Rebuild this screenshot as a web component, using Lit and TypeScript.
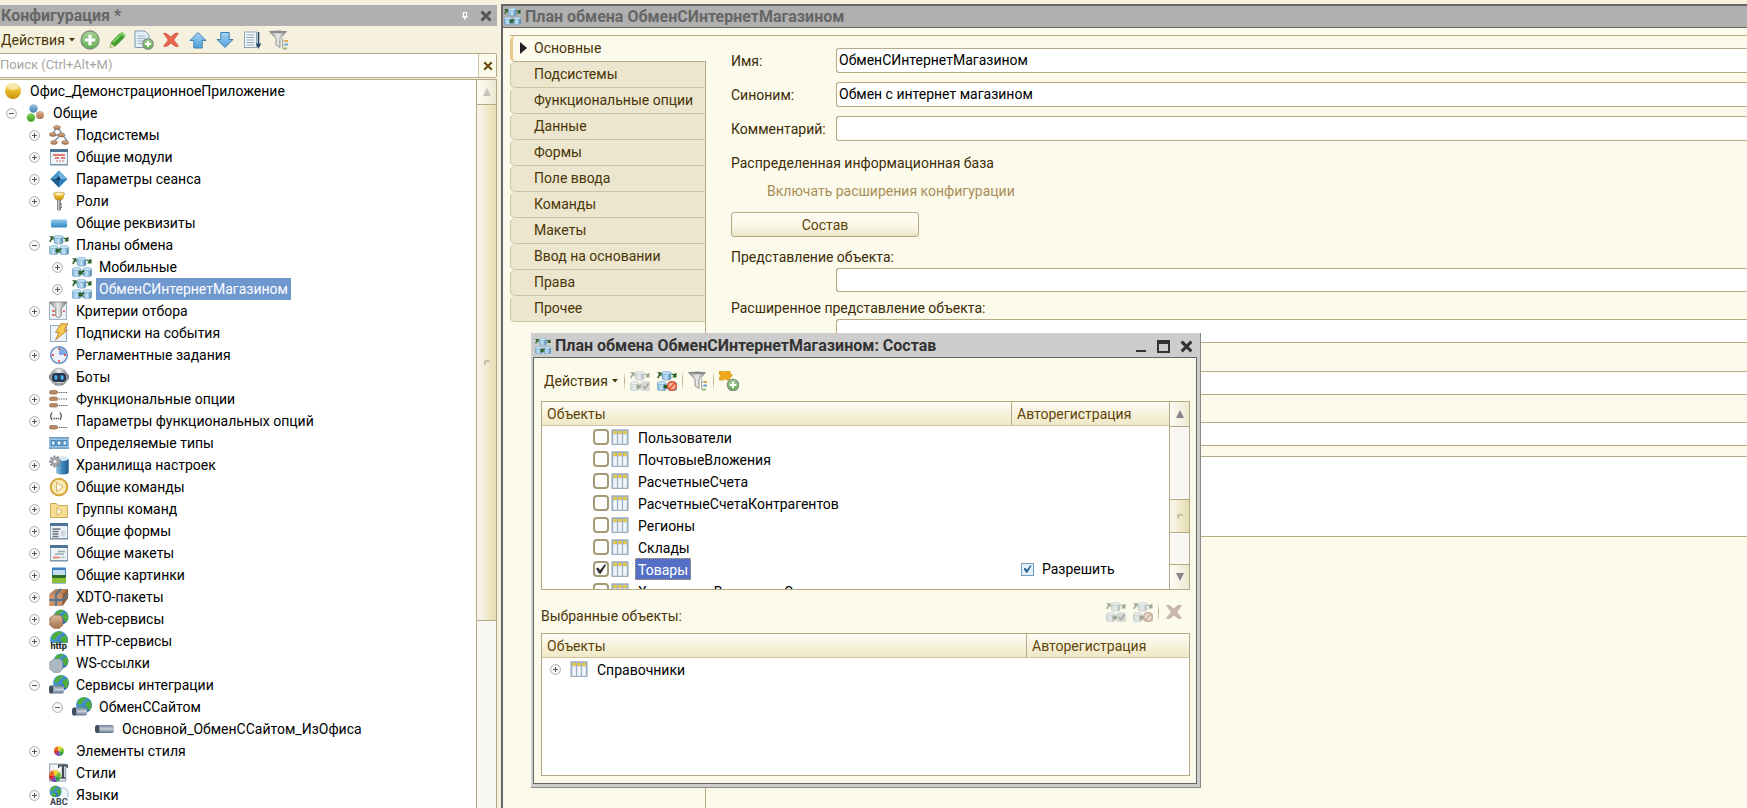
import { LitElement, html, svg, css, nothing, TemplateResult, SVGTemplateResult } from "lit";
import { customElement, state } from "lit/decorators.js";
import { classMap } from "lit/directives/class-map.js";

const cylinder = (x: number, y: number) => svg`
  <path d="M${x} ${y + 1.6}v6.200c0 1.900 8.600 1.900 8.600 0v-6.200z" fill="url(#cyl)" stroke="#5f93b5" stroke-width=".6"/>
  <ellipse cx="${x + 4.3}" cy="${y + 1.7}" rx="4.300" ry="1.600" fill="#c4e2f3" stroke="#6fa5c6" stroke-width=".6"/>`;

const exchangeBase = svg`
  ${cylinder(5.3, 0)}${cylinder(0.4, 10.5)}${cylinder(11, 10.5)}
  <path d="M0 1.200h4.600v4.200L3.300 4.200 1.300 7.400 .2 6.400 2 3z" fill="#2a5f27"/>
  <path d="M14.600 2l1.600 1.200 3.300-1.400v4.600h-4.300l1.400-1.600-2-1.200z" fill="#2a5f27"/>
  <path d="M6.500 17.200l.4-4.200 1.300 1.200 4-1.200v1.800l-2.200 1.200 2.800 1.600z" fill="#2a5f27"/>`;

const windowFrame = svg`
  <rect x="1.500" y="2.500" width="17" height="15" fill="#eef3f8" stroke="#8aa3ba"/>
  <rect x="1" y="2" width="18" height="3" fill="#4d7396"/>
  <path d="M1 18h18" stroke="#6f8aa3"/>`;

const globe = (cx: number, cy: number, r: number) => svg`
  <circle cx="${cx}" cy="${cy}" r="${r}" fill="url(#sea)"/>
  <path transform="translate(${cx} ${cy}) scale(${r / 8})" fill="#4fae3a"
    d="M-5-5.500C-2-8 2-7.600 3-7L1-4.500-1.500-4-2-1.500-5 0l-2-1.500zM2.500-3l3.500-1.500C8-2 7.800 2 6 5L3.500 4.500 3 1.500 1 0zM-4 2l3-.5L1 4-1 7.500C-3 7-5 6-6 4z"/>`;

const tube = (y: number, w: number) => svg`
  <rect x="0" y="${y}" width="${w}" height="8" rx="2.500" fill="url(#tube)"/>
  <ellipse cx="2.200" cy="${y + 4}" rx="2.200" ry="4" fill="#3f4d5c"/>`;

const wheel = (cx: number, cy: number, r: number) => svg`
  <g transform="translate(${cx} ${cy}) scale(${r})">
    <path d="M0 0L-1 0A1 1 0 0 1-.3-.95z" fill="#e8682a"/>
    <path d="M0 0L-.3-.95A1 1 0 0 1 .7-.7z" fill="#f4d32c"/>
    <path d="M0 0L.7-.7A1 1 0 0 1 .95.3z" fill="#7fc12e"/>
    <path d="M0 0L.95.3A1 1 0 0 1 .2.98z" fill="#2f9a4d"/>
    <path d="M0 0L.2.98A1 1 0 0 1-.75.66z" fill="#7a3fae"/>
    <path d="M0 0L-.75.66A1 1 0 0 1-1 0z" fill="#d8222c"/>
  </g>`;

const funnel = svg`
  <path d="M.5 1.500h17l-6.500 7v9l-4-2.500V8.500z" fill="url(#steel)" stroke="#777" stroke-width=".7"/>
  <ellipse cx="9" cy="1.900" rx="8.300" ry="1.300" fill="#8a8a8a"/>`;

const funnelTree = svg`${funnel}
  <path d="M13.500 8v10M13.500 11h2M13.500 15h2M13.500 18.500h2" stroke="#8a9aa8" stroke-width=".8" fill="none"/>
  <path d="M15.500 10h3.500v2h-3.500z" fill="#e0a552"/><path d="M15.500 13.500h3.500v2h-3.500z" fill="#5ba3d8"/>
  <path d="M14 17.500h4v2h-4z" fill="#9aba7c"/>`;

const plusBadge = (cx: number, cy: number, r: number) => svg`
  <circle cx="${cx}" cy="${cy}" r="${r}" fill="url(#green)" stroke="#7d8f7a" stroke-width="1.300"/>
  <path d="M${cx - r * 0.58} ${cy}h${r * 1.16}M${cx} ${cy - r * 0.58}v${r * 1.16}" stroke="#fff" stroke-width="${r * 0.36}"/>`;

const option = (y: number) => svg`
  <rect x=".5" y="${y}" width="8" height="3.600" rx="1.500" fill="#b98a64" stroke="#8c6344" stroke-width=".6"/>
  <path d="M9.500 ${y + 2}h9" stroke="#555" stroke-width="1.200" stroke-dasharray="1.400 1"/>`;

const brownPill = (x: number, y: number) => svg`
  <ellipse cx="${x}" cy="${y}" rx="3.400" ry="1.900" fill="url(#brown)" stroke="#8a5a3a" stroke-width=".6"/>`;

const hexNut = (fill: string, stroke: string) => svg`
  <path d="M.8 9l4-3h6l3 3v7l-3.500 3.300H4.800L.8 16z" fill="${fill}" stroke="${stroke}" stroke-width=".7"/>`;

const crossShape = "M3 3.500C5 2.500 7.500 5.500 10 7.500 12 5 14.500 2.500 17 3.500L12.500 10l4.500 6c-2 1.500-5-1.500-7-3.500-2 2-5 5-7 3.500L7.500 10z";

const ICONS: Record<string, SVGTemplateResult> = {
  ball: svg`<circle cx="10" cy="10" r="8" fill="url(#gold)"/><ellipse cx="10" cy="6" rx="6" ry="3" fill="#fff" opacity=".45"/>`,
  common: svg`<circle cx="7.500" cy="5.500" r="4.200" fill="url(#blueBall)"/><circle cx="5" cy="14.500" r="4.200" fill="url(#greenBall)"/><circle cx="14" cy="12" r="4" fill="url(#brown)"/>`,
  subsystems: svg`<path d="M7 3L4 9M9 3l9 13M12 9.500l-8 8M5 10.500l9-1.500" stroke="#7f98b0" stroke-width="1.400" fill="none"/>
    ${brownPill(8, 2.5)}${brownPill(3.8, 9.5)}${brownPill(12.5, 10)}${brownPill(5, 17.5)}${brownPill(16.2, 17.5)}`,
  module: svg`${windowFrame}<path d="M4 8h12M6 11h4M12 11h4" stroke="#e0544a" stroke-width="1.600"/><path d="M7 14h9" stroke="#c7736d" stroke-width="1" stroke-dasharray="2 1"/>`,
  diamond: svg`<path d="M10 1.500l8.500 8.500-8.500 8.500L1.500 10z" fill="#2c7fb8"/><path d="M10 1.500l8.500 8.500H10z" fill="#6fb4de"/><path d="M10 1.500V10H1.500z" fill="#4c97c8"/><path d="M10 18.500L1.500 10H10z" fill="#1d5f92"/><path d="M10 7l1.500 3L10 12 6.500 10.500z" fill="#123f66"/>`,
  role: svg`<path d="M8 8h4v11l-2 .8-2-.8z" fill="#8a8a8a"/><path d="M9 8h1.200v11H9z" fill="#c8c8c8"/><path d="M11.500 12.500H13v1.500h-1.500zM11.500 15.500H13V17h-1.500z" fill="#777"/><path d="M4.500 2.500C5 .8 15 .8 15.500 2.500L14 7.500c-1 2-7 2-8 0z" fill="url(#gold)" stroke="#a88432" stroke-width=".6"/><ellipse cx="10" cy="3" rx="3.500" ry="1.200" fill="#fff3c4"/>`,
  bar: svg`<rect x="2" y="6.500" width="16" height="8" rx="1.500" fill="url(#barBlue)"/>`,
  exchange: exchangeBase,
  exchangeCheck: svg`${exchangeBase}<rect x="11" y="10.500" width="9" height="9.500" rx="1.500" fill="#aeb9c2"/><path d="M13 15l2 2.500 3.500-5" stroke="#4b5b68" stroke-width="1.600" fill="none"/>`,
  exchangeBan: svg`${exchangeBase}<circle cx="15" cy="15" r="4.300" fill="#f7b49c" stroke="#e0532f" stroke-width="1.600"/><path d="M12.200 18l5.600-6" stroke="#e0532f" stroke-width="1.600"/>`,
  criteria: svg`<rect x=".5" y="2.500" width="17" height="16" fill="#e8eff5" stroke="#9fb3c4"/><path d="M3 10h3M14 10h2M3 14h3" stroke="#e0544a" stroke-width="1.500"/><path d="M.3 1h17.500l-5.500 6.500v7l-1.800 2h-2l-1.800-2v-7z" fill="url(#steel)" stroke="#777" stroke-width=".8"/>`,
  event: svg`<rect x="1.500" y="2.500" width="16" height="16" fill="#eef3f7" stroke="#93a9bc"/><path d="M12 .8h7L15 7h3.500L6.500 17l3.500-7.500H6.500z" fill="#f7c948" stroke="#b5752a" stroke-width=".8"/>`,
  clock: svg`<circle cx="10" cy="10" r="8.300" fill="#edf2fa" stroke="#6f8fc4" stroke-width="1.600"/><path d="M10 10V2.500a7.500 7.500 0 0 1 7.500 7.500z" fill="#7fa8e0"/><path d="M9.300 3h1.600v2H9.300zM9.300 15h1.600v2H9.300zM3 9.300h2v1.600H3zM15 9.300h2v1.600h-2z" fill="#e8483c"/>`,
  bot: svg`<rect x="0" y="7" width="20" height="6" rx="2" fill="#7a828c"/><circle cx="10" cy="10" r="8.800" fill="url(#steel)" stroke="#8a9099" stroke-width=".6"/><rect x="3" y="6" width="14" height="9" rx="3.500" fill="#26384f"/><rect x="5.500" y="8.500" width="2.800" height="4" fill="#55b4ef"/><rect x="11.700" y="8.500" width="2.800" height="4" fill="#55b4ef"/><path d="M6 17h8" stroke="#555" stroke-width="1"/>`,
  options: svg`${option(1.5)}${option(8)}${option(14.5)}`,
  optionParams: svg`<path d="M3 1.500Q.5 5 3 9M11 1.500q2.500 3.500 0 7.500" stroke="#444" fill="none" stroke-width="1.200"/><path d="M4.500 7.500h5.500" stroke="#444" stroke-width="1.400" stroke-dasharray="1.400 .8"/>${option(14.5)}`,
  types: svg`<path d="M0 5h20M0 15h20" stroke="#4a86b8" stroke-width="1.400"/><path d="M0 5.700h20v8.600H0z" fill="#9cc6e6"/><g fill="#eef7fd" stroke="#3f7fb5" stroke-width="1.300"><rect x="2.200" y="7.700" width="4" height="4.600"/><rect x="8" y="7.700" width="4" height="4.600"/><rect x="13.800" y="7.700" width="4" height="4.600"/></g>`,
  storage: svg`<path d="M7 4v13.500c0 2.600 12.700 2.600 12.700 0V4z" fill="url(#deepBlue)"/><ellipse cx="13.400" cy="3.600" rx="6.300" ry="2.400" fill="#cfe6f4"/><circle cx="6" cy="6.500" r="4.800" fill="none" stroke="#808488" stroke-width="2.200" stroke-dasharray="2 1.400"/><circle cx="6" cy="6.500" r="4.500" fill="#9ea2a6"/><circle cx="6" cy="6.500" r="1.700" fill="#e8e8e8"/>`,
  command: svg`<circle cx="10" cy="10" r="8.300" fill="#f8e8b4" stroke="#d7a63a" stroke-width="2"/><path d="M7.500 5.500l6.500 4.500-6.500 4.500z" fill="#fffdf3" stroke="#c9a24a" stroke-width=".8"/>`,
  folder: svg`<path d="M1.500 4.500h6l1.500 2h9.500v12h-17z" fill="#f5dd92" stroke="#cfa954"/><path d="M8 8.500l5 4-5 4z" fill="#fffdf3" stroke="#c9a24a" stroke-width=".8"/>`,
  form: svg`${windowFrame}<path d="M3.500 8h8M3.500 10.500h6M3.500 13h6M3.500 15.500h6" stroke="#6b7680" stroke-width="1.300"/><rect x="11.500" y="9.500" width="5" height="6" fill="#cfd6dc"/>`,
  template: svg`${windowFrame}<path d="M9 8.500h7M6 11h9" stroke="#9aa8b4" stroke-width="1.300"/><path d="M4 14.500h7" stroke="#e08a6a" stroke-width="1.800"/><path d="M12 14.500h4" stroke="#a9bccb" stroke-width="1.500"/>`,
  picture: svg`<rect x="3" y="2.500" width="14" height="16" rx="1" fill="#3f7fc4"/><rect x="4" y="5" width="12" height="5" fill="#c4def2"/><rect x="3" y="10" width="14" height="3" fill="#2e6b24"/><rect x="3" y="13" width="14" height="5" fill="#8dbf3a"/>`,
  xdto: svg`<path d="M.5 7l6-5H19v9l-5.500 8H.5z" fill="#b77f55"/><path d="M.5 7h13v12H.5z" fill="#c9926a"/><path d="M13.500 7L19 2v9l-5.500 8z" fill="#8d5c3a"/><path d="M7 7v12M.5 13h13l5.500-6M7 7l5-5" stroke="#4f7392" stroke-width="1.800" fill="none"/>`,
  web: svg`${globe(12, 8, 7.5)}${hexNut("url(#brown)", "#8a5f42")}`,
  http: svg`${globe(10, 9, 9)}<rect x="1" y="12" width="19" height="8" fill="#fff" opacity=".8"/><text x="1.500" y="18" font-size="9" font-weight="700" font-family="Roboto, sans-serif" fill="#222">http</text>`,
  ws: svg`${globe(12, 8, 7.5)}${hexNut("#aeb8c2", "#828d98")}`,
  integration: svg`${globe(12, 8, 8)}${tube(10.5, 15)}`,
  channel: svg`${tube(6, 19)}`,
  styleItem: svg`${wheel(10, 10, 5)}`,
  styles: svg`<rect x=".7" y="1" width="16" height="17" fill="#f3f5f7" stroke="#8797a5"/><path d="M9 1.500h10v3.500h-1l-.8-1.800h-2V14l1.300.8v1h-5v-1l1.300-.8V3.200h-2L10 5H9z" fill="#3f4a55"/>${wheel(6, 13, 6)}`,
  languages: svg`<path d="M8 3h8l3 3v9H8z" fill="#eef4f8" stroke="#8fb0c8" stroke-width=".8"/>${globe(6.5, 6.5, 6)}<rect x="0" y="12" width="20" height="8" fill="#fff" opacity=".75"/><text x="1" y="19.500" font-size="9" font-weight="700" font-family="Roboto, sans-serif" fill="#3a4450">ABC</text>`,
  add: svg`${plusBadge(10, 10, 9)}`,
  edit: svg`<path d="M3 18l1.500-6L13 3.500 17.500 7 9 15.500z" fill="#3fa02c" stroke="#2c7a1e" stroke-width=".6"/><path d="M13 3.500L15 1.800 18.800 5.200 17.500 7z" fill="#7fce6a"/><path d="M6 12.500l8-8" stroke="#8fdc78" stroke-width="1.500"/><path d="M3 18l1.200-4.500 3.300 3z" fill="#f0dcae"/>`,
  copy: svg`<path d="M1 1h10l4 4v12.500H1z" fill="#e4eef6" stroke="#7d9ab3"/><path d="M3.500 6h8M3.500 8.500h8M3.500 11h6M3.500 13.500h5" stroke="#9db4c8"/>${plusBadge(14, 14, 5.2)}`,
  del: svg`<path d="${crossShape}" fill="#ec6a50" stroke="#d9604a" stroke-width="1.200"/>`,
  up: svg`<path d="M10 2.500l8 8h-3.800V18H5.800v-7.500H2z" fill="url(#arrow)" stroke="#3f7fae" stroke-width="1"/>`,
  down: svg`<path d="M10 17.500l8-8h-3.800V2.500H5.800v7H2z" fill="url(#arrow)" stroke="#3f7fae" stroke-width="1"/>`,
  sort: svg`<rect x="2.500" y="2" width="12" height="15.500" fill="#f4f8fb" stroke="#8ca6bc"/><path d="M4.500 5h8M4.500 7.500h8M4.500 10h8M4.500 12.500h8M4.500 15h8" stroke="#8fa5b8"/><path d="M16.500 2v14" stroke="#23476b" stroke-width="1.600"/><path d="M13.800 13.500h5.400L16.500 19z" fill="#23476b"/>`,
  filter: funnelTree,
  puzzle: svg`<path d="M0 0h4.200q1 2.200 2.400 0H11v3.200q2-.8 2.200 1.200-.2 2-2.200 1.200V9H7.500Q6 6.600 4.500 9H.5V6.200q2.600-1.400 0-2.800z" fill="#f0a818" stroke="#c98a10" stroke-width=".6"/>${plusBadge(14, 14, 5.6)}`,
  catalog: svg`<rect x="1" y="2" width="18" height="16.500" fill="#a3b3c2" stroke="#8fa1b2" stroke-width=".8"/><path d="M2.500 7h4v10.500h-4zM8 7h4v10.500H8zM13.500 7h4v10.500h-4z" fill="#eef6fb"/><path d="M2.500 3.200h4v3.200h-4zM8 3.200h4v3.200H8zM13.500 3.200h4v3.200h-4z" fill="#ecc93c"/>`,
  removeGrey: svg`<path d="${crossShape}" fill="#c9b6ac" stroke="#c9b6ac" stroke-width="1.200"/>`,
};

const icon = (name: string, cls = ""): TemplateResult =>
  html`<svg class="icon ${cls}" viewBox="0 0 20 20" aria-hidden="true">${ICONS[name]}</svg>`;

type Node = { level: number; icon: string; text: string; state?: "open" | "closed" };

const n = (level: number, icon: string, text: string, mark = ""): Node => ({
  level,
  icon,
  text,
  state: mark === "+" ? "closed" : mark === "-" ? "open" : undefined,
});

const TREE: Node[] = [
  n(0, "ball", "Офис_ДемонстрационноеПриложение"),
  n(1, "common", "Общие", "-"),
  n(2, "subsystems", "Подсистемы", "+"),
  n(2, "module", "Общие модули", "+"),
  n(2, "diamond", "Параметры сеанса", "+"),
  n(2, "role", "Роли", "+"),
  n(2, "bar", "Общие реквизиты"),
  n(2, "exchange", "Планы обмена", "-"),
  n(3, "exchange", "Мобильные", "+"),
  n(3, "exchange", "ОбменСИнтернетМагазином", "+"),
  n(2, "criteria", "Критерии отбора", "+"),
  n(2, "event", "Подписки на события"),
  n(2, "clock", "Регламентные задания", "+"),
  n(2, "bot", "Боты"),
  n(2, "options", "Функциональные опции", "+"),
  n(2, "optionParams", "Параметры функциональных опций", "+"),
  n(2, "types", "Определяемые типы"),
  n(2, "storage", "Хранилища настроек", "+"),
  n(2, "command", "Общие команды", "+"),
  n(2, "folder", "Группы команд", "+"),
  n(2, "form", "Общие формы", "+"),
  n(2, "template", "Общие макеты", "+"),
  n(2, "picture", "Общие картинки", "+"),
  n(2, "xdto", "XDTO-пакеты", "+"),
  n(2, "web", "Web-сервисы", "+"),
  n(2, "http", "HTTP-сервисы", "+"),
  n(2, "ws", "WS-ссылки"),
  n(2, "integration", "Сервисы интеграции", "-"),
  n(3, "integration", "ОбменССайтом", "-"),
  n(4, "channel", "Основной_ОбменССайтом_ИзОфиса"),
  n(2, "styleItem", "Элементы стиля", "+"),
  n(2, "styles", "Стили"),
  n(2, "languages", "Языки", "+"),
];

const TABS = ["Основные", "Подсистемы", "Функциональные опции", "Данные", "Формы", "Поле ввода", "Команды", "Макеты", "Ввод на основании", "Права", "Прочее"];

const OBJECTS = ["Пользователи", "ПочтовыеВложения", "РасчетныеСчета", "РасчетныеСчетаКонтрагентов", "Регионы", "Склады", "Товары", "ХранилищеВариантовСхем"];

@customElement("app-root")
export class AppRoot extends LitElement {
  @state() private selectedNode = "ОбменСИнтернетМагазином";
  @state() private activeTab = "Основные";
  @state() private checked = new Set<string>(["Товары"]);

  static styles = css`
    :host {
      --line: #b5aa84;
      --soft-line: #ccc4a3;
      --paper: #fcfaeb;
      --ink: #4a3508;
      display: grid;
      grid-template-columns: 497px minmax(0, 1fr);
      column-gap: 4px;
      height: 100vh;
      padding-top: 4px;
      box-sizing: border-box;
      overflow: hidden;
      position: relative;
      background: #f5f1de;
      color: #000;
      font: 14px/20px Roboto, "Liberation Sans", sans-serif;
    }
    *, *::before, *::after { box-sizing: border-box; }
    button, input, textarea { font: inherit; color: inherit; margin: 0; }
    button { padding: 0; border: 0; background: none; cursor: pointer; }
    ul { list-style: none; margin: 0; padding: 0; }
    h1, h2 { margin: 0; font-size: 16px; line-height: 20px; font-weight: 700; white-space: nowrap; }
    .defs { position: absolute; width: 0; height: 0; }
    .icon { width: 20px; height: 20px; flex: none; display: block; }
    .dim { filter: grayscale(0.6); opacity: 0.5; }

    .panel { display: flex; flex-direction: column; min-height: 0; }
    .panel-title { display: flex; align-items: center; height: 21px; margin-top: 1px; background: #b0b0b0; color: #666; }
    .panel-title h2 { flex: 1; padding-left: 1px; }
    .glyph { display: block; width: 12px; height: 12px; }
    .panel-title .glyph { margin-right: 5px; }
    .panel-title .pin { width: 8px; margin-right: 11px; }
    .toolbar { display: flex; align-items: center; gap: 7px; height: 27px; }
    .menu { display: flex; align-items: center; gap: 4px; color: var(--ink); padding-left: 1px; }
    .menu svg { width: 7px; height: 4px; }
    .panel .menu { margin-right: -3px; }
    .search { display: flex; height: 25px; border: solid var(--line); border-width: 1px 1px 1px 0; border-radius: 0 3px 3px 0; background: #fff; }
    .search input { flex: 1; min-width: 0; border: 0; padding: 0 0 2px; background: none; outline: none; font-size: 13px; }
    .search input::placeholder { color: #aaa6a0; opacity: 1; }
    .search button { display: grid; place-items: center; width: 18px; border-left: 1px solid var(--soft-line); background: #fbf9e9; }
    .search svg { width: 10px; height: 10px; }
    .tree-box { display: flex; flex: 1; min-height: 0; margin-top: 1px; border: solid var(--line); border-width: 1px 1px 0 0; background: #fff; overflow: hidden; }
    .tree { flex: 1; min-width: 0; }
    .node { display: flex; align-items: center; height: 22px; white-space: nowrap; }
    .twist { width: 20px; height: 22px; flex: none; display: flex; align-items: center; }
    .twist svg { width: 11px; height: 11px; }
    .caption { height: 22px; margin-left: 4px; padding: 0 3px; line-height: 22px; }
    .caption.selected { background: #6f98cf; color: #fff; }

    .scroll { display: flex; flex-direction: column; flex: none; width: 20px; border-left: 1px solid var(--line); background: #f8f7f3; }
    .scroll button { display: grid; place-items: center; height: 25px; flex: none; background: linear-gradient(90deg, #fdfcf5, #ece8d0); }
    .scroll button:first-child { border-bottom: 1px solid var(--line); }
    .scroll button:last-child { border-top: 1px solid var(--line); }
    .scroll svg { width: 8px; height: 8px; }
    .thumb { display: grid; place-items: center; background: linear-gradient(90deg, #f6f2e6 20%, #ede7c6 60%, #e6ddb4); border-bottom: 1px solid var(--line); }
    .thumb::before { content: ""; width: 6px; height: 5px; border: solid #c5bfa2; border-width: 2px 0 0 2px; border-radius: 2px; }
    .tree-thumb { height: 516px; }

    .editor { display: flex; flex-direction: column; min-width: 0; border: solid #666; border-width: 2px 0 0 2px; background: var(--paper); }
    .editor-title { display: flex; align-items: center; height: 22px; background: #b0b0b0; color: #666; border-bottom: 1px solid #666; }
    .editor-title .icon { width: 17px; height: 17px; margin: 0 4px 0 1px; }
    .sheet { display: flex; flex: 1; min-height: 0; margin: 7px 0 0 7px; border-top: 1px solid var(--line); }
    .tabs { display: flex; flex-direction: column; width: 196px; flex: none; color: var(--ink); }
    .tabs::after { content: ""; flex: 1; border-right: 1px solid var(--line); }
    .tab { display: flex; align-items: center; height: 26px; flex: none; padding: 0 0 1px 23px; border: solid var(--soft-line); border-width: 0 0 1px 1px; border-right: 1px solid var(--line); border-radius: 5px 0 0 5px; background: #ebe6cd; }
    .tab.active { padding-left: 7px; gap: 7px; border-width: 0 0 1px 3px; border-color: var(--line); border-left-color: #e8c88c; background: var(--paper); }
    .tab svg { width: 7px; height: 12px; }
    .form { flex: 1; min-width: 0; padding: 12px 0 0 25px; color: #3c2c08; }
    .field { display: flex; align-items: center; margin-bottom: 9px; }
    .field label { width: 105px; flex: none; }
    .box { display: block; height: 25px; border: solid var(--line); border-width: 1px 0 1px 1px; border-radius: 3px 0 0 3px; background: #fff; color: #000; padding: 0 2px 2px; outline: none; resize: none; }
    .field .box { flex: 1; min-width: 0; }
    .form p { margin: 12px 0 0; line-height: 20px; }
    .form .faded { margin: 8px 0 11px 36px; color: #a98d58; }
    .push { display: block; width: 188px; height: 25px; border: 1px solid var(--line); border-radius: 3px; background: linear-gradient(#fefdf7, #faf6e4 60%, #ece6c8); color: #5a4208; }
    .stack { display: flex; flex-direction: column; padding-top: 10px; }
    .stack label { height: 20px; margin-bottom: 1px; }
    .stack .box { height: 24px; margin-left: 105px; margin-bottom: 6px; }
    .stack .bare { margin-top: 22px; margin-bottom: 5px; }
    .stack .tall { height: 81px; margin-top: 5px; }

    .dialog { position: absolute; left: 531px; top: 333px; width: 670px; height: 455px; display: flex; flex-direction: column; padding: 0 3px 3px 2px; background: #cdcdcd; border: solid #8a8a8a; border-width: 0 1px 1px 0; color: var(--ink); }
    .dialog-title { display: flex; align-items: center; height: 24px; flex: none; padding-top: 2px; color: #333; }
    .dialog-title h2 { flex: 1; padding-left: 4px; }
    .dialog-title .icon { width: 16px; height: 16px; margin-left: 2px; }
    .dialog-title button { margin-right: 10px; }
    .dialog-title button:last-child { margin-right: 4px; }
    .dialog-title .glyph { width: 13px; height: 13px; }
    .dialog-body { display: flex; flex-direction: column; flex: 1; min-height: 0; border: 1px solid #666; background: var(--paper); padding: 7px 6px 7px 7px; }
    .dialog-body .toolbar { height: 31px; padding-left: 2px; }
    .sep { width: 1px; height: 20px; background: linear-gradient(transparent, var(--line), transparent); }
    .dialog-body .toolbar .sep { margin: 0 -2px; }
    .grid { display: flex; border: 1px solid var(--line); background: #fff; overflow: hidden; }
    .grid-a { height: 189px; margin-top: 5px; }
    .grid-b { flex: 1; }
    .view { flex: 1; min-width: 0; overflow: hidden; }
    table { width: 100%; border-collapse: separate; border-spacing: 0; table-layout: fixed; color: #000; }
    th { height: 24px; padding: 0 5px; text-align: left; font-weight: 400; color: #5f4508; background: linear-gradient(#fdfcf5, #f5f0d8 60%, #efe9c8); border-bottom: 1px solid var(--soft-line); }
    th + th { border-left: 1px solid var(--line); }
    .auto-a { width: 158px; }
    .auto-b { width: 163px; }
    td { height: 22px; padding: 0; }
    .cell { display: flex; align-items: center; height: 22px; padding-left: 51px; white-space: nowrap; }
    .cell .icon { width: 18px; height: 18px; margin-left: 2px; }
    .cell .twist { width: 18px; }
    .cell.root { padding-left: 8px; }
    .cell .name { height: 22px; line-height: 24px; margin-left: 6px; padding: 0 3px; }
    .name.current { background: #5470c6; color: #fff; outline: 1px dotted #c8a860; outline-offset: -1px; }
    .check { appearance: none; display: grid; place-items: center; width: 16px; height: 16px; flex: none; border: 2px solid #a59a76; border-radius: 4px; background: #fff; }
    .check:checked::before { content: ""; width: 10px; height: 10px; background: #333; clip-path: polygon(0 45%, 22% 35%, 40% 60%, 90% 0, 100% 12%, 45% 100%, 30% 95%); }
    .cell.flag { padding-left: 10px; }
    .cell.flag .check { width: 13px; height: 13px; border: 1px solid #6f9fc4; border-radius: 0; background: #e3eff8; }
    .cell.flag .check:checked::before { width: 8px; height: 8px; background: #2f648f; }
    .cell.flag label { padding-left: 8px; }
    .gap-a { height: 73px; border-bottom: 1px solid var(--line); }
    .thumb-a { height: 33px; }
    .gap-b { flex: 1; }
    .chosen { display: flex; align-items: center; gap: 7px; height: 43px; padding-right: 6px; }
    .chosen span { flex: 1; padding-top: 8px; }
    .chosen .sep { margin: 0 -2px; }
  `;

  private gradients() {
    const g = (id: string, x2: number, y2: number, ...stops: string[]) => svg`
      <linearGradient id="${id}" x1="0" y1="0" x2="${x2}" y2="${y2}">
        ${stops.map((c, i) => svg`<stop offset="${i / (stops.length - 1)}" stop-color="${c}"/>`)}
      </linearGradient>`;
    return html`<svg class="defs" aria-hidden="true"><defs>
      ${g("cyl", 1, 0, "#7fb8dc", "#c4e2f4", "#3f7fae")}
      ${g("sea", 1, 1, "#5fb0ea", "#1c5fae")}
      ${g("tube", 0, 1, "#6f8496", "#c3d0dc", "#5c7184")}
      ${g("steel", 1, 0, "#8c8c8c", "#ececec", "#7c7c7c")}
      ${g("green", 0, 1, "#a8d49a", "#5fae50")}
      ${g("gold", 0, 1, "#fbe38a", "#e9b92a", "#c9920e")}
      ${g("brown", 0, 1, "#e0b898", "#a5714c")}
      ${g("blueBall", 0, 1, "#9cc4e4", "#3f7fb4")}
      ${g("greenBall", 0, 1, "#7fd458", "#3f9a1e")}
      ${g("barBlue", 0, 1, "#8ecbf0", "#2f86c0")}
      ${g("deepBlue", 1, 0, "#9cc8e6", "#3f86bd", "#235a8c")}
      ${g("arrow", 0, 1, "#a5d3f4", "#4f9fd8")}
    </defs></svg>`;
  }

  private cross(color: string, width: number) {
    return html`<svg class="glyph" viewBox="0 0 12 12" aria-hidden="true"><path d="M1.500 1.500l9 9M10.500 1.500l-9 9" stroke="${color}" stroke-width="${width}"/></svg>`;
  }

  private twist(open: boolean) {
    return html`<svg viewBox="0 0 11 11" aria-hidden="true">
      <circle cx="5.500" cy="5.500" r="4.900" fill="#fafafa" stroke="#a9a9a9"/>
      <path d="${open ? "M3 5.500h5" : "M3 5.500h5M5.500 3v5"}" stroke="#555"/></svg>`;
  }

  private menuButton() {
    return html`<button class="menu">Действия
      <svg viewBox="0 0 7 4" aria-hidden="true"><path d="M0 0h6L3 3.500z" fill="#4a3508"/></svg></button>`;
  }

  private tool(name: string, label: string, cls = "") {
    return html`<button title="${label}" aria-label="${label}">${icon(name, cls)}</button>`;
  }

  private arrow(dir: "up" | "down", color: string) {
    return html`<button aria-label="${dir === "up" ? "Вверх" : "Вниз"}"><svg viewBox="0 0 9 9" aria-hidden="true">
      <path d="${dir === "up" ? "M4.500 0L9 9H0z" : "M0 0h9L4.500 9z"}" fill="${color}"/></svg></button>`;
  }

  private toggle(name: string) {
    const next = new Set(this.checked);
    next.has(name) ? next.delete(name) : next.add(name);
    this.checked = next;
  }

  private treePanel() {
    return html`<aside class="panel">
      <header class="panel-title">
        <h2>Конфигурация *</h2>
        <button aria-label="Закрепить"><svg class="glyph pin" viewBox="0 0 8 12" aria-hidden="true">
          <path d="M2.500 2.500h3v4h-3zM1 7h6M4 7v3" fill="none" stroke="#fff" stroke-width="1.200"/></svg></button>
        <button aria-label="Закрыть панель">${this.cross("#555", 3)}</button>
      </header>
      <div class="toolbar">
        ${this.menuButton()}
        ${this.tool("add", "Добавить")}${this.tool("edit", "Изменить")}${this.tool("copy", "Скопировать")}
        ${this.tool("del", "Удалить")}${this.tool("up", "Переместить вверх")}${this.tool("down", "Переместить вниз")}
        ${this.tool("sort", "Упорядочить")}${this.tool("filter", "Отбор")}
      </div>
      <div class="search">
        <input type="text" aria-label="Поиск" placeholder="Поиск (Ctrl+Alt+M)" />
        <button aria-label="Очистить">${this.cross("#6b4e10", 2.6)}</button>
      </div>
      <div class="tree-box">
        <ul class="tree" role="tree">
          ${TREE.map((node) => html`<li class="node" role="treeitem"
            style="padding-left:${node.level ? node.level * 23 - 17 : 3}px"
            @click=${() => (this.selectedNode = node.text)}>
            ${node.level ? html`<span class="twist">${node.state ? this.twist(node.state === "open") : nothing}</span>` : nothing}
            ${icon(node.icon)}
            <span class=${classMap({ caption: true, selected: node.text === this.selectedNode })}>${node.text}</span>
          </li>`)}
        </ul>
        <div class="scroll">
          ${this.arrow("up", "#c4c2bc")}
          <div class="thumb tree-thumb"></div>
        </div>
      </div>
    </aside>`;
  }

  private editor() {
    return html`<main class="editor">
      <header class="editor-title">${icon("exchange")}<h1>План обмена ОбменСИнтернетМагазином</h1></header>
      <div class="sheet">
        <nav class="tabs">
          ${TABS.map((tab) => html`<button class=${classMap({ tab: true, active: tab === this.activeTab })}
            @click=${() => (this.activeTab = tab)}>
            ${tab === this.activeTab ? html`<svg viewBox="0 0 7 12" aria-hidden="true"><path d="M0 0l7 6-7 6z" fill="#222"/></svg>` : nothing}${tab}
          </button>`)}
        </nav>
        <form class="form">
          <div class="field"><label for="name">Имя:</label><input class="box" id="name" type="text" value="ОбменСИнтернетМагазином" /></div>
          <div class="field"><label for="synonym">Синоним:</label><input class="box" id="synonym" type="text" value="Обмен с интернет магазином" /></div>
          <div class="field"><label for="comment">Комментарий:</label><input class="box" id="comment" type="text" /></div>
          <p>Распределенная информационная база</p>
          <p class="faded">Включать расширения конфигурации</p>
          <button class="push" type="button">Состав</button>
          <div class="stack">
            <label for="view">Представление объекта:</label><input class="box" id="view" type="text" />
            <label for="view-ext">Расширенное представление объекта:</label><input class="box" id="view-ext" type="text" />
            <input class="box bare" type="text" aria-label="Представление списка" />
            <input class="box bare" type="text" aria-label="Расширенное представление списка" />
            <textarea class="box tall" aria-label="Пояснение"></textarea>
          </div>
        </form>
      </div>
    </main>`;
  }

  private dialog() {
    return html`<section class="dialog" role="dialog" aria-labelledby="dialog-title">
      <header class="dialog-title">${icon("exchange")}
        <h2 id="dialog-title">План обмена ОбменСИнтернетМагазином: Состав</h2>
        <button aria-label="Свернуть"><svg class="glyph" viewBox="0 0 13 13" aria-hidden="true"><path d="M2 11h10" stroke="#333" stroke-width="2"/></svg></button>
        <button aria-label="Развернуть"><svg class="glyph" viewBox="0 0 13 13" aria-hidden="true"><path d="M1 1h11v11H1zM1 3h11" fill="none" stroke="#333" stroke-width="2"/></svg></button>
        <button aria-label="Закрыть">${this.cross("#333", 2.8)}</button>
      </header>
      <div class="dialog-body">
        <div class="toolbar">
          ${this.menuButton()}<i class="sep"></i>
          ${this.tool("exchangeCheck", "Включить все", "dim")}${this.tool("exchangeBan", "Исключить все")}<i class="sep"></i>
          ${this.tool("filter", "Отбор")}<i class="sep"></i>${this.tool("puzzle", "Добавить расширение")}
        </div>
        <div class="grid grid-a">
          <div class="view"><table>
            <thead><tr><th>Объекты</th><th class="auto-a">Авторегистрация</th></tr></thead>
            <tbody>${OBJECTS.map((name) => html`<tr>
              <td><div class="cell"><input class="check" type="checkbox" aria-label="${name}"
                .checked=${this.checked.has(name)} @change=${() => this.toggle(name)} />
                ${icon("catalog")}<span class=${classMap({ name: true, current: name === "Товары" })}>${name}</span></div></td>
              <td>${this.checked.has(name) ? html`<div class="cell flag"><input class="check" id="allow" type="checkbox" checked /><label for="allow">Разрешить</label></div>` : nothing}</td>
            </tr>`)}</tbody>
          </table></div>
          <div class="scroll">
            ${this.arrow("up", "#85858a")}
            <div class="gap-a"></div><div class="thumb thumb-a"></div><div class="gap-b"></div>
            ${this.arrow("down", "#85858a")}
          </div>
        </div>
        <div class="chosen"><span>Выбранные объекты:</span>
          ${this.tool("exchangeCheck", "Разрешить всем", "dim")}${this.tool("exchangeBan", "Запретить всем", "dim")}
          <i class="sep"></i>${this.tool("removeGrey", "Удалить из состава")}
        </div>
        <div class="grid grid-b">
          <div class="view"><table>
            <thead><tr><th>Объекты</th><th class="auto-b">Авторегистрация</th></tr></thead>
            <tbody><tr><td><div class="cell root"><span class="twist">${this.twist(false)}</span>${icon("catalog")}<span class="name">Справочники</span></div></td><td></td></tr></tbody>
          </table></div>
        </div>
      </div>
    </section>`;
  }

  render() {
    return html`${this.gradients()}${this.treePanel()}${this.editor()}${this.dialog()}`;
  }
}
